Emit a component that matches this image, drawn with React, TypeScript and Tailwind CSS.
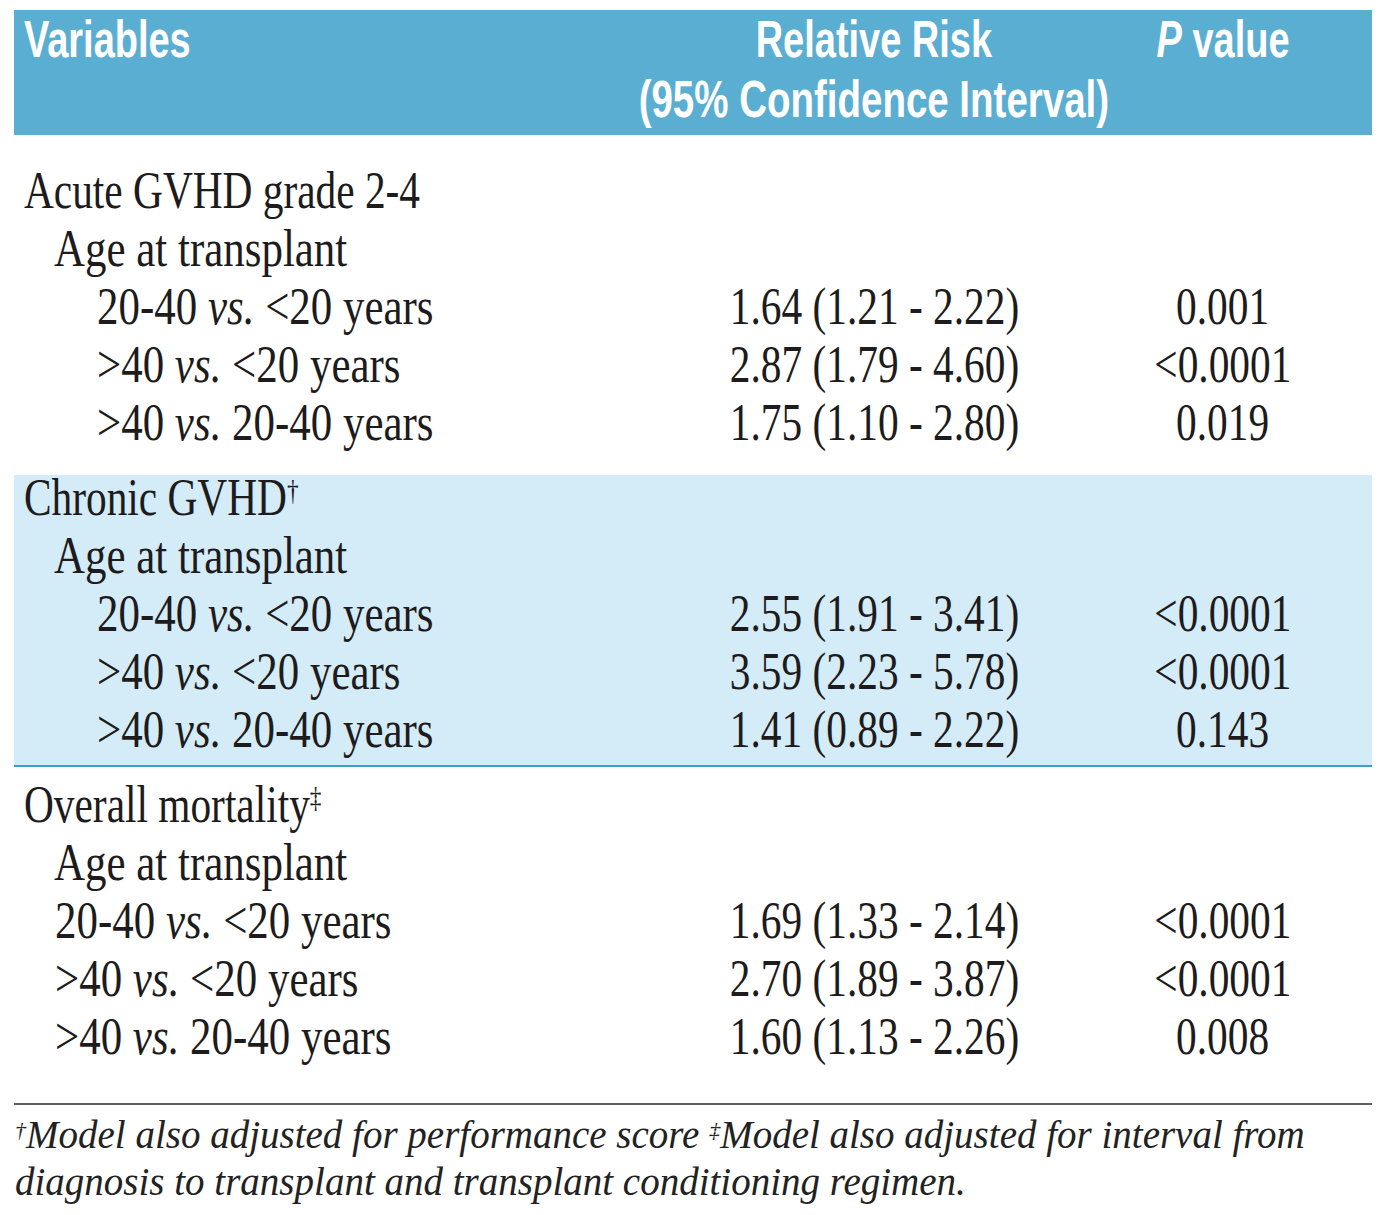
import React from "react";

type Row = {
  label: React.ReactNode;
  indent: 0 | 1 | 2 | 3;
  rr?: string;
  p?: string;
};

const indentClass = {
  0: "pl-[10px]",
  1: "pl-[40px]",
  2: "pl-[83px]",
  3: "pl-[41px]",
};

const vs = (a: string, b: string) => (
  <>
    {a} <i>vs.</i> {b}
  </>
);

const acute: Row[] = [
  { label: "Acute GVHD grade 2-4", indent: 0 },
  { label: "Age at transplant", indent: 1 },
  { label: vs("20-40", "<20 years"), indent: 2, rr: "1.64 (1.21 - 2.22)", p: "0.001" },
  { label: vs(">40", "<20 years"), indent: 2, rr: "2.87 (1.79 - 4.60)", p: "<0.0001" },
  { label: vs(">40", "20-40 years"), indent: 2, rr: "1.75 (1.10 - 2.80)", p: "0.019" },
];

const chronic: Row[] = [
  {
    label: (
      <>
        Chronic GVHD<sup className="text-[30px]">†</sup>
      </>
    ),
    indent: 0,
  },
  { label: "Age at transplant", indent: 1 },
  { label: vs("20-40", "<20 years"), indent: 2, rr: "2.55 (1.91 - 3.41)", p: "<0.0001" },
  { label: vs(">40", "<20 years"), indent: 2, rr: "3.59 (2.23 - 5.78)", p: "<0.0001" },
  { label: vs(">40", "20-40 years"), indent: 2, rr: "1.41 (0.89 - 2.22)", p: "0.143" },
];

const mortality: Row[] = [
  {
    label: (
      <>
        Overall mortality<sup className="text-[30px]">‡</sup>
      </>
    ),
    indent: 0,
  },
  { label: "Age at transplant", indent: 1 },
  { label: vs("20-40", "<20 years"), indent: 3, rr: "1.69 (1.33 - 2.14)", p: "<0.0001" },
  { label: vs(">40", "<20 years"), indent: 3, rr: "2.70 (1.89 - 3.87)", p: "<0.0001" },
  { label: vs(">40", "20-40 years"), indent: 3, rr: "1.60 (1.13 - 2.26)", p: "0.008" },
];

function BodyRow({ row }: { row: Row }) {
  return (
    <div className="grid h-[58px] grid-cols-[620px_480px_218px] text-[53px] leading-[44px] whitespace-nowrap text-[#1d1b1b]">
      <div className={indentClass[row.indent]}>
        <span
          className={
            row.indent === 0
              ? "inline-block origin-left scale-x-[0.78]"
              : "inline-block origin-left scale-x-[0.81]"
          }
        >
          {row.label}
        </span>
      </div>
      <div className="text-center">
        {row.rr && <span className="inline-block origin-center scale-x-[0.78]">{row.rr}</span>}
      </div>
      <div className="text-center">
        {row.p && <span className="inline-block origin-center scale-x-[0.78]">{row.p}</span>}
      </div>
    </div>
  );
}

export default function App() {
  return (
    <div className="h-[1215px] w-[1386px] overflow-hidden bg-white font-['Liberation_Serif',serif]">
      <div className="mx-[14px] pt-[10px]">
        {/* header */}
        <div className="grid h-[125px] grid-cols-[620px_480px_218px] bg-[#5aaed1] font-['Liberation_Sans',Arial,sans-serif] text-[52px] leading-[60px] font-bold whitespace-nowrap text-white">
          <div className="-mt-px pl-[10px]">
            <span className="inline-block origin-left scale-x-[0.73]">Variables</span>
          </div>
          <div className="-mt-px flex flex-col items-center">
            <span className="inline-block scale-x-[0.73]">Relative Risk</span>
            <span className="inline-block scale-x-[0.74]">(95% Confidence Interval)</span>
          </div>
          <div className="-mt-px text-center">
            <span className="inline-block scale-x-[0.73]">
              <i>P</i> value
            </span>
          </div>
        </div>

        <div className="mt-[33px]">
          {acute.map((r, i) => (
            <BodyRow key={i} row={r} />
          ))}
        </div>

        <div className="mt-[17px] border-b-2 border-[#3d9fd0] bg-[#d4ebf8]">
          {chronic.map((r, i) => (
            <BodyRow key={i} row={r} />
          ))}
        </div>

        <div className="mt-[15px]">
          {mortality.map((r, i) => (
            <BodyRow key={i} row={r} />
          ))}
        </div>

        <div className="mt-[31px] h-[2px] bg-[#5f5f5f]" />

        <div className="mt-[6px] pl-px text-[39px] leading-[47px] font-light whitespace-nowrap text-[#222] italic">
          <div>
            <sup className="text-[22px]">†</sup>Model also adjusted for performance score{" "}
            <sup className="text-[22px]">‡</sup>Model also adjusted for interval from
          </div>
          <div>diagnosis to transplant and transplant conditioning regimen.</div>
        </div>
      </div>
    </div>
  );
}
